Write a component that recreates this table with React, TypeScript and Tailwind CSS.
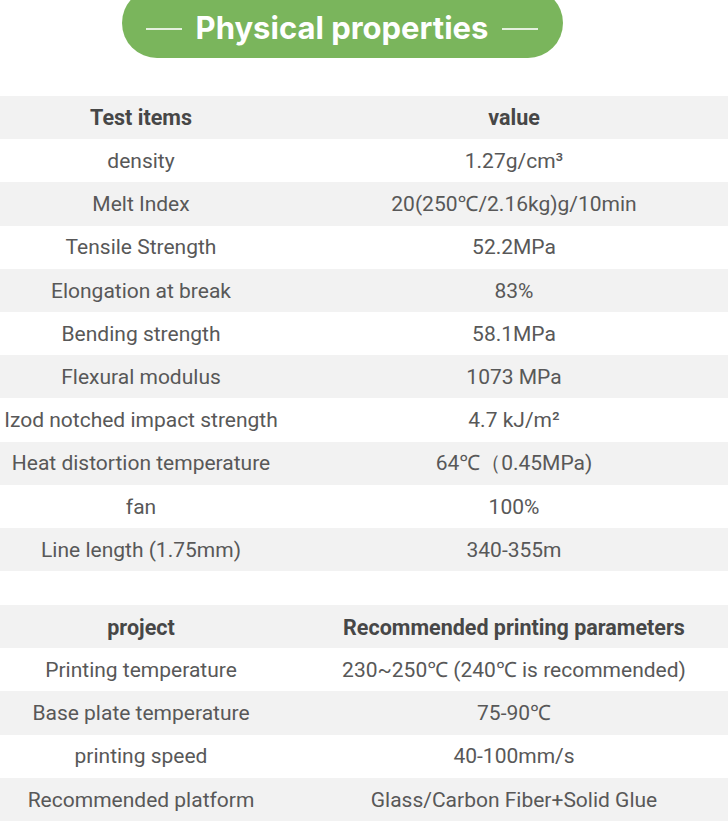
import React from "react";

const t1: [string, string][] = [
  ["density", "1.27g/cm³"],
  ["Melt Index", "20(250℃/2.16kg)g/10min"],
  ["Tensile Strength", "52.2MPa"],
  ["Elongation at break", "83%"],
  ["Bending strength", "58.1MPa"],
  ["Flexural modulus", "1073 MPa"],
  ["Izod notched impact strength", "4.7 kJ/m²"],
  ["Heat distortion temperature", "64℃（0.45MPa)"],
  ["fan", "100%"],
  ["Line length (1.75mm)", "340-355m"],
];

const t2: [string, string][] = [
  ["Printing temperature", "230~250℃ (240℃ is recommended)"],
  ["Base plate temperature", "75-90℃"],
  ["printing speed", "40-100mm/s"],
  ["Recommended platform", "Glass/Carbon Fiber+Solid Glue"],
];

function Row({ a, b, gray, head }: { a: string; b: string; gray: boolean; head?: boolean }) {
  return (
    <div
      className={`grid grid-cols-[282px_438px] h-[43.2px] items-center pt-[2px] ${gray ? "bg-[#f2f2f2]" : "bg-white"} ${
        head ? "font-bold text-[#474747] text-[21.5px]" : "text-[#585858] text-[21px]"
      }`}
    >
      <div className="text-center whitespace-nowrap">{a}</div>
      <div className="text-center whitespace-nowrap pl-[26px]">{b}</div>
    </div>
  );
}

export default function App() {
  return (
    <div
      className="w-[728px] h-[826px] bg-white overflow-hidden relative"
      style={{ fontFamily: "Roboto, 'Noto Sans', sans-serif" }}
    >
      <div className="flex justify-center">
        <div className="ml-[-44px] mt-[-12px] w-[441px] h-[70px] rounded-full bg-[#7ab55c] flex items-center justify-center gap-[14px] pt-[8px]">
          <div className="w-[36px] h-[1.5px] bg-white/80 mt-[4px]" />
          <div className="text-white font-bold text-[31px] leading-none" style={{ fontFamily: "Inter, sans-serif" }}>
            Physical properties
          </div>
          <div className="w-[36px] h-[1.5px] bg-white/80 mt-[4px]" />
        </div>
      </div>
      <div className="mt-[38px]">
        <Row a="Test items" b="value" gray head />
        {t1.map((r, i) => (
          <Row key={i} a={r[0]} b={r[1]} gray={i % 2 === 1} />
        ))}
      </div>
      <div className="mt-[34px]">
        <Row a="project" b="Recommended printing parameters" gray head />
        {t2.map((r, i) => (
          <Row key={i} a={r[0]} b={r[1]} gray={i % 2 === 1} />
        ))}
      </div>
    </div>
  );
}
